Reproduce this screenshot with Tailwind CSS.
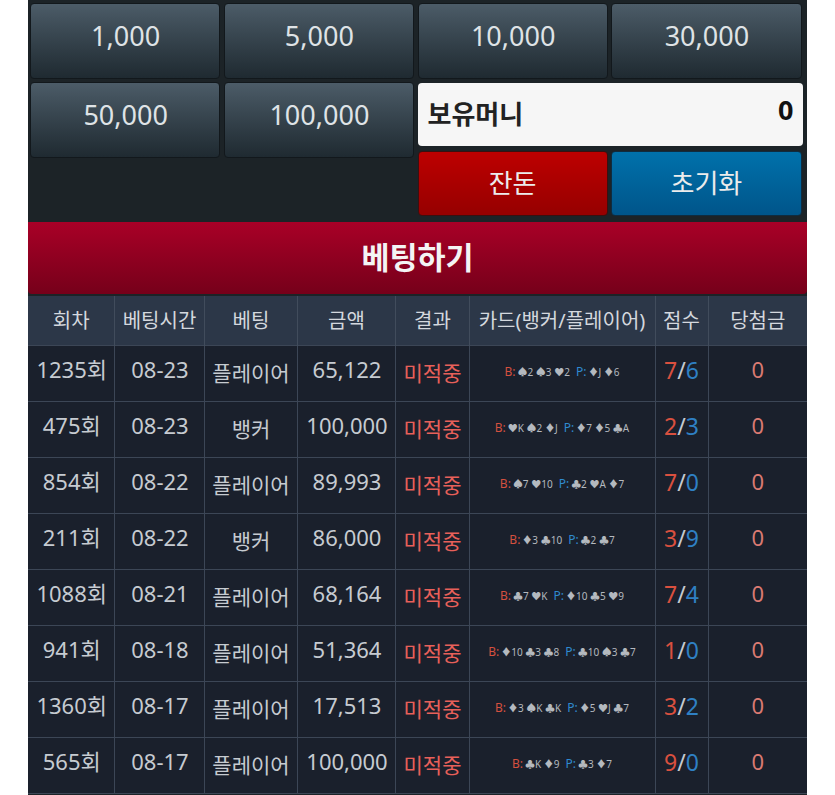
<!DOCTYPE html>
<html lang="ko">
<head>
<meta charset="utf-8">
<script src="https://cdn.jsdelivr.net/npm/@tailwindcss/browser@4"></script>
</head>
<body class="bg-white">
<div class="w-[835px] h-[795px] overflow-hidden font-['Noto_Sans','Noto_Sans_CJK_KR',sans-serif]">
  <div class="ml-[28px] w-[779px] h-[795px] bg-[#1c2327] overflow-hidden">
    <div class="h-[222px] pt-[3px] pl-[2px] pr-[5.5px] flex flex-col gap-[3px]">
      <div class="grid grid-cols-4 gap-[3.5px] h-[76px] text-[27px] text-[#dfe3e6]">
        <div class="flex items-center justify-center pb-[10px] pl-[1px] rounded-[4px] border border-[#12181c] bg-linear-to-b from-[#4c5c68] to-[#1f2a31]">1,000</div>
        <div class="flex items-center justify-center pb-[10px] pl-[1px] rounded-[4px] border border-[#12181c] bg-linear-to-b from-[#4c5c68] to-[#1f2a31]">5,000</div>
        <div class="flex items-center justify-center pb-[10px] pl-[1px] rounded-[4px] border border-[#12181c] bg-linear-to-b from-[#4c5c68] to-[#1f2a31]">10,000</div>
        <div class="flex items-center justify-center pb-[10px] pl-[1px] rounded-[4px] border border-[#12181c] bg-linear-to-b from-[#4c5c68] to-[#1f2a31]">30,000</div>
      </div>
      <div class="grid grid-cols-2 gap-[3.5px] flex-1">
        <div class="grid grid-cols-2 gap-[3.5px] h-[76px] text-[27px] text-[#dfe3e6]">
          <div class="flex items-center justify-center pb-[10px] pl-[1px] rounded-[4px] border border-[#12181c] bg-linear-to-b from-[#4c5c68] to-[#1f2a31]">50,000</div>
          <div class="flex items-center justify-center pb-[10px] pl-[1px] rounded-[4px] border border-[#12181c] bg-linear-to-b from-[#4c5c68] to-[#1f2a31]">100,000</div>
        </div>
        <div class="flex flex-col gap-[5px] -mr-[1px] mt-[1px]">
          <div class="h-[63px] bg-[#f6f6f6] rounded-[4px] flex justify-between pl-[10px] pr-[9px] text-[#222] font-bold">
            <span class="text-[26px] leading-[63px]">보유머니</span>
            <span class="text-[27px] leading-[54px] text-[#111]">0</span>
          </div>
          <div class="grid grid-cols-2 gap-[3.5px] h-[65px] mr-[1px] text-[26px] text-[#ececec]">
            <div class="flex items-center justify-center rounded-[4px] border border-[#3a1010] bg-linear-to-b from-[#bd0000] to-[#960000]">잔돈</div>
            <div class="flex items-center justify-center rounded-[4px] border border-[#0f2c40] bg-linear-to-b from-[#0071ab] to-[#00558a]">초기화</div>
          </div>
        </div>
      </div>
    </div>
    <div class="h-[72px] rounded-b-[4px] bg-linear-to-b from-[#a90027] to-[#76001a] flex items-center justify-center text-[30.5px] font-bold text-[#f4f4f4]">베팅하기</div>
    <div class="h-[2px] bg-[#1c2327]"></div>
    <table class="w-[779px] table-fixed border-collapse text-center text-[21px] text-[#c6cbd1]">
      <colgroup>
        <col class="w-[86px]"><col class="w-[90px]"><col class="w-[93px]"><col class="w-[98px]"><col class="w-[74px]"><col class="w-[186px]"><col class="w-[53px]"><col class="w-[99px]">
      </colgroup>
      <thead>
        <tr class="h-[49px] bg-[#2c3748] text-[20px] text-[#d4d8de]">
          <th class="font-normal border-r border-[#414c5c] pt-[2px] pl-[1px]">회차</th>
          <th class="font-normal border-r border-[#414c5c] pt-[2px] pl-[1px]">베팅시간</th>
          <th class="font-normal border-r border-[#414c5c] pt-[2px] pl-[1px]">베팅</th>
          <th class="font-normal border-r border-[#414c5c] pt-[2px] pl-[1px]">금액</th>
          <th class="font-normal border-r border-[#414c5c] pt-[2px] pl-[1px]">결과</th>
          <th class="font-normal border-r border-[#414c5c] pt-[2px]">카드(뱅커/플레이어)</th>
          <th class="font-normal border-r border-[#414c5c] pt-[2px]">점수</th>
          <th class="font-normal pt-[2px]">당첨금</th>
        </tr>
      </thead>
      <tbody class="bg-[#1a202c]">
        <tr class="h-[56px] border-t border-[#3c4656]">
          <td class="border-r border-[#3c4656] pb-[7px] pl-[2px] text-[22px]">1235회</td><td class="border-r border-[#3c4656] pb-[7px] pl-[2px] text-[22px]">08-23</td><td class="border-r border-[#3c4656] pt-[1px] pl-[1px]">플레이어</td><td class="border-r border-[#3c4656] pb-[7px] pl-[2px] text-[22px]">65,122</td>
          <td class="border-r border-[#3c4656] pt-[1px] pl-[1px] text-[#e8605a]">미적중</td>
          <td class="border-r border-[#3c4656] pb-[2px] text-[10px] text-[#b4b9bf]"><span class="text-[12px] mr-[2px] text-[#d4503f]">B:</span>♠2 ♠3 ♥2<span class="text-[12px] ml-[6px] mr-[2px] text-[#2f8ad0]">P:</span>♦J ♦6</td>
          <td class="border-r border-[#3c4656] pb-[5px] text-[23px] text-[#c6cbd1]"><span class="text-[#d9503f]">7</span>/<span class="text-[#2f80c4]">6</span></td>
          <td class="pb-[7px] text-[22px] text-[#d97a72]">0</td>
        </tr>
        <tr class="h-[56px] border-t border-[#3c4656]">
          <td class="border-r border-[#3c4656] pb-[7px] pl-[2px] text-[22px]">475회</td><td class="border-r border-[#3c4656] pb-[7px] pl-[2px] text-[22px]">08-23</td><td class="border-r border-[#3c4656] pt-[1px] pl-[1px]">뱅커</td><td class="border-r border-[#3c4656] pb-[7px] pl-[2px] text-[22px]">100,000</td>
          <td class="border-r border-[#3c4656] pt-[1px] pl-[1px] text-[#e8605a]">미적중</td>
          <td class="border-r border-[#3c4656] pb-[2px] text-[10px] text-[#b4b9bf]"><span class="text-[12px] mr-[2px] text-[#d4503f]">B:</span>♥K ♠2 ♦J<span class="text-[12px] ml-[6px] mr-[2px] text-[#2f8ad0]">P:</span>♦7 ♦5 ♣A</td>
          <td class="border-r border-[#3c4656] pb-[5px] text-[23px] text-[#c6cbd1]"><span class="text-[#d9503f]">2</span>/<span class="text-[#2f80c4]">3</span></td>
          <td class="pb-[7px] text-[22px] text-[#d97a72]">0</td>
        </tr>
        <tr class="h-[56px] border-t border-[#3c4656]">
          <td class="border-r border-[#3c4656] pb-[7px] pl-[2px] text-[22px]">854회</td><td class="border-r border-[#3c4656] pb-[7px] pl-[2px] text-[22px]">08-22</td><td class="border-r border-[#3c4656] pt-[1px] pl-[1px]">플레이어</td><td class="border-r border-[#3c4656] pb-[7px] pl-[2px] text-[22px]">89,993</td>
          <td class="border-r border-[#3c4656] pt-[1px] pl-[1px] text-[#e8605a]">미적중</td>
          <td class="border-r border-[#3c4656] pb-[2px] text-[10px] text-[#b4b9bf]"><span class="text-[12px] mr-[2px] text-[#d4503f]">B:</span>♠7 ♥10<span class="text-[12px] ml-[6px] mr-[2px] text-[#2f8ad0]">P:</span>♣2 ♥A ♦7</td>
          <td class="border-r border-[#3c4656] pb-[5px] text-[23px] text-[#c6cbd1]"><span class="text-[#d9503f]">7</span>/<span class="text-[#2f80c4]">0</span></td>
          <td class="pb-[7px] text-[22px] text-[#d97a72]">0</td>
        </tr>
        <tr class="h-[56px] border-t border-[#3c4656]">
          <td class="border-r border-[#3c4656] pb-[7px] pl-[2px] text-[22px]">211회</td><td class="border-r border-[#3c4656] pb-[7px] pl-[2px] text-[22px]">08-22</td><td class="border-r border-[#3c4656] pt-[1px] pl-[1px]">뱅커</td><td class="border-r border-[#3c4656] pb-[7px] pl-[2px] text-[22px]">86,000</td>
          <td class="border-r border-[#3c4656] pt-[1px] pl-[1px] text-[#e8605a]">미적중</td>
          <td class="border-r border-[#3c4656] pb-[2px] text-[10px] text-[#b4b9bf]"><span class="text-[12px] mr-[2px] text-[#d4503f]">B:</span>♦3 ♣10<span class="text-[12px] ml-[6px] mr-[2px] text-[#2f8ad0]">P:</span>♣2 ♣7</td>
          <td class="border-r border-[#3c4656] pb-[5px] text-[23px] text-[#c6cbd1]"><span class="text-[#d9503f]">3</span>/<span class="text-[#2f80c4]">9</span></td>
          <td class="pb-[7px] text-[22px] text-[#d97a72]">0</td>
        </tr>
        <tr class="h-[56px] border-t border-[#3c4656]">
          <td class="border-r border-[#3c4656] pb-[7px] pl-[2px] text-[22px]">1088회</td><td class="border-r border-[#3c4656] pb-[7px] pl-[2px] text-[22px]">08-21</td><td class="border-r border-[#3c4656] pt-[1px] pl-[1px]">플레이어</td><td class="border-r border-[#3c4656] pb-[7px] pl-[2px] text-[22px]">68,164</td>
          <td class="border-r border-[#3c4656] pt-[1px] pl-[1px] text-[#e8605a]">미적중</td>
          <td class="border-r border-[#3c4656] pb-[2px] text-[10px] text-[#b4b9bf]"><span class="text-[12px] mr-[2px] text-[#d4503f]">B:</span>♣7 ♥K<span class="text-[12px] ml-[6px] mr-[2px] text-[#2f8ad0]">P:</span>♦10 ♣5 ♥9</td>
          <td class="border-r border-[#3c4656] pb-[5px] text-[23px] text-[#c6cbd1]"><span class="text-[#d9503f]">7</span>/<span class="text-[#2f80c4]">4</span></td>
          <td class="pb-[7px] text-[22px] text-[#d97a72]">0</td>
        </tr>
        <tr class="h-[56px] border-t border-[#3c4656]">
          <td class="border-r border-[#3c4656] pb-[7px] pl-[2px] text-[22px]">941회</td><td class="border-r border-[#3c4656] pb-[7px] pl-[2px] text-[22px]">08-18</td><td class="border-r border-[#3c4656] pt-[1px] pl-[1px]">플레이어</td><td class="border-r border-[#3c4656] pb-[7px] pl-[2px] text-[22px]">51,364</td>
          <td class="border-r border-[#3c4656] pt-[1px] pl-[1px] text-[#e8605a]">미적중</td>
          <td class="border-r border-[#3c4656] pb-[2px] text-[10px] text-[#b4b9bf]"><span class="text-[12px] mr-[2px] text-[#d4503f]">B:</span>♦10 ♣3 ♣8<span class="text-[12px] ml-[6px] mr-[2px] text-[#2f8ad0]">P:</span>♣10 ♠3 ♣7</td>
          <td class="border-r border-[#3c4656] pb-[5px] text-[23px] text-[#c6cbd1]"><span class="text-[#d9503f]">1</span>/<span class="text-[#2f80c4]">0</span></td>
          <td class="pb-[7px] text-[22px] text-[#d97a72]">0</td>
        </tr>
        <tr class="h-[56px] border-t border-[#3c4656]">
          <td class="border-r border-[#3c4656] pb-[7px] pl-[2px] text-[22px]">1360회</td><td class="border-r border-[#3c4656] pb-[7px] pl-[2px] text-[22px]">08-17</td><td class="border-r border-[#3c4656] pt-[1px] pl-[1px]">플레이어</td><td class="border-r border-[#3c4656] pb-[7px] pl-[2px] text-[22px]">17,513</td>
          <td class="border-r border-[#3c4656] pt-[1px] pl-[1px] text-[#e8605a]">미적중</td>
          <td class="border-r border-[#3c4656] pb-[2px] text-[10px] text-[#b4b9bf]"><span class="text-[12px] mr-[2px] text-[#d4503f]">B:</span>♦3 ♠K ♣K<span class="text-[12px] ml-[6px] mr-[2px] text-[#2f8ad0]">P:</span>♦5 ♥J ♣7</td>
          <td class="border-r border-[#3c4656] pb-[5px] text-[23px] text-[#c6cbd1]"><span class="text-[#d9503f]">3</span>/<span class="text-[#2f80c4]">2</span></td>
          <td class="pb-[7px] text-[22px] text-[#d97a72]">0</td>
        </tr>
        <tr class="h-[56px] border-y border-[#3c4656]">
          <td class="border-r border-[#3c4656] pb-[7px] pl-[2px] text-[22px]">565회</td><td class="border-r border-[#3c4656] pb-[7px] pl-[2px] text-[22px]">08-17</td><td class="border-r border-[#3c4656] pt-[1px] pl-[1px]">플레이어</td><td class="border-r border-[#3c4656] pb-[7px] pl-[2px] text-[22px]">100,000</td>
          <td class="border-r border-[#3c4656] pt-[1px] pl-[1px] text-[#e8605a]">미적중</td>
          <td class="border-r border-[#3c4656] pb-[2px] text-[10px] text-[#b4b9bf]"><span class="text-[12px] mr-[2px] text-[#d4503f]">B:</span>♣K ♦9<span class="text-[12px] ml-[6px] mr-[2px] text-[#2f8ad0]">P:</span>♣3 ♦7</td>
          <td class="border-r border-[#3c4656] pb-[5px] text-[23px] text-[#c6cbd1]"><span class="text-[#d9503f]">9</span>/<span class="text-[#2f80c4]">0</span></td>
          <td class="pb-[7px] text-[22px] text-[#d97a72]">0</td>
        </tr>
      </tbody>
    </table>
  </div>
</div>
</body>
</html>
